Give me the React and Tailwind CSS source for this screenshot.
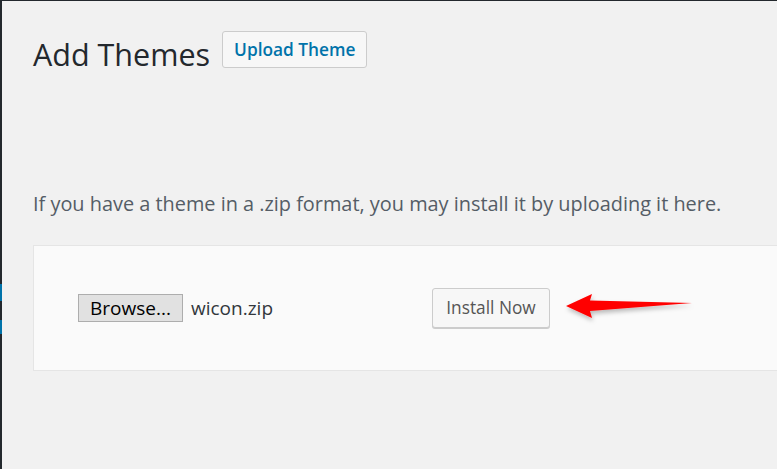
import React from "react";

const Arrow = () => (
  <svg width="134" height="34" viewBox="0 0 134 34" className="ml-[12px] shrink-0">
    <defs>
      <filter id="sh" x="-10%" y="-30%" width="120%" height="180%">
        <feDropShadow dx="1" dy="3" stdDeviation="2" floodColor="#000" floodOpacity="0.25" />
      </filter>
    </defs>
    <polygon
      points="4,15 30,3 28,9.5 130,12 28,20 30,27"
      fill="#ff0000"
      filter="url(#sh)"
    />
  </svg>
);

const App = () => {
  return (
    <div
      className="w-[777px] h-[469px] overflow-hidden bg-[#f1f1f1] flex flex-col"
      style={{ fontFamily: '"Open Sans", "Noto Sans", sans-serif' }}
    >
      <div className="h-px bg-[#23282d]" />
      <div className="flex flex-1">
        {/* admin menu edge */}
        <div className="w-[2px] shrink-0 flex flex-col bg-[#23282d]">
          <div className="h-[283px]" />
          <div className="h-[17px] bg-[#0073aa]" />
          <div className="h-[19px]" />
          <div className="h-[14px] bg-[#0073aa]" />
        </div>

        <div className="flex-1 min-w-0 pl-[31px]">
          <div className="flex items-start gap-[12px] pt-[30px]">
            <h1 className="pt-[4px] text-[30.5px] leading-[39px] text-[#23282d]">Add Themes</h1>
            <button className="h-[37px] px-[11px] rounded-[3px] border border-[#cccccc] bg-[#f7f7f7] text-[17.3px] text-[#0073aa] font-semibold shrink-0">
              Upload Theme
            </button>
          </div>

          <p className="mt-[116px] text-[19.9px] leading-[28px] text-[#555d66] whitespace-nowrap">
            If you have a theme in a .zip format, you may install it by uploading it here.
          </p>

          <div className="mt-[27px] h-[126px] w-[760px] border border-[#e5e5e5] bg-[#fafafa] flex items-center pl-[44px]">
            <div className="w-[340px] shrink-0 flex items-center gap-[8px]">
              <span className="h-[28px] w-[105px] flex items-center justify-center border border-[#adadad] bg-[#e1e1e1] text-[19px] text-black">
                Browse...
              </span>
              <span className="text-[19px] text-[#32373c]">wicon.zip</span>
            </div>
            <button className="ml-[14px] h-[40px] w-[118px] shrink-0 rounded-[3px] border border-[#cccccc] bg-[#f7f7f7] text-[17.3px] text-[#555555] shadow-[0_1px_0_#cccccc]">
              Install Now
            </button>
            <Arrow />
          </div>
        </div>
      </div>
    </div>
  );
};

export default App;
